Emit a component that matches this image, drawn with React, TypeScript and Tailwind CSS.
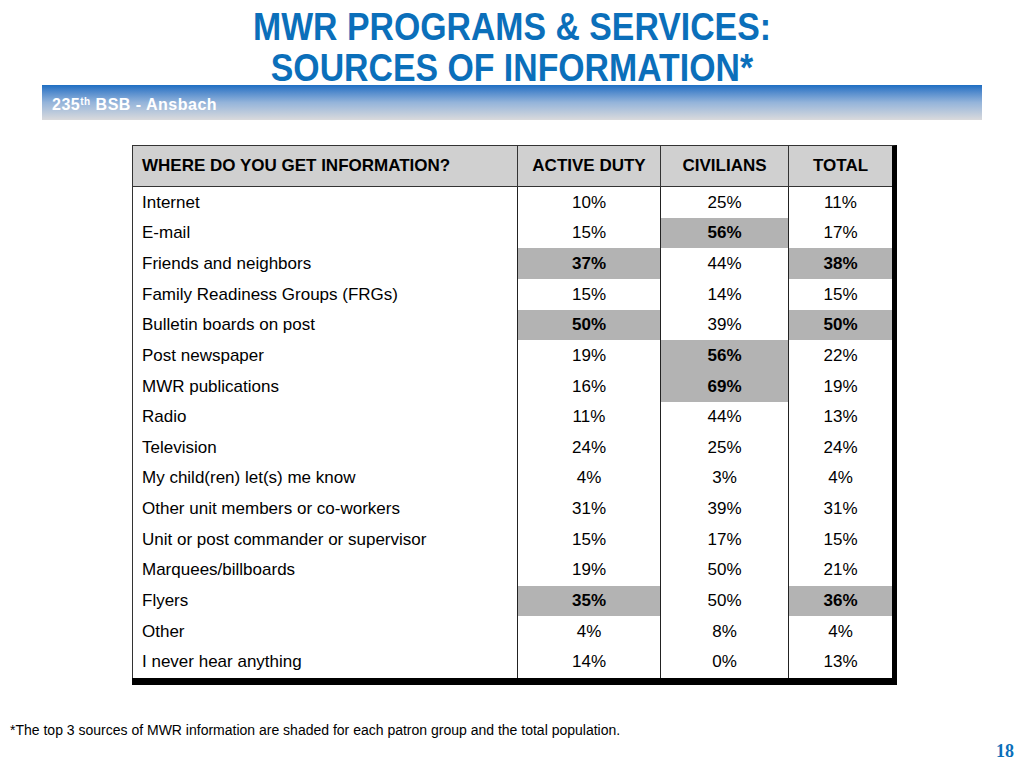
import React from "react";

type Row = { label: string; a: string; c: string; t: string; sa?: boolean; sc?: boolean; st?: boolean };

const rows: Row[] = [
  { label: "Internet", a: "10%", c: "25%", t: "11%" },
  { label: "E-mail", a: "15%", c: "56%", t: "17%", sc: true },
  { label: "Friends and neighbors", a: "37%", c: "44%", t: "38%", sa: true, st: true },
  { label: "Family Readiness Groups (FRGs)", a: "15%", c: "14%", t: "15%" },
  { label: "Bulletin boards on post", a: "50%", c: "39%", t: "50%", sa: true, st: true },
  { label: "Post newspaper", a: "19%", c: "56%", t: "22%", sc: true },
  { label: "MWR publications", a: "16%", c: "69%", t: "19%", sc: true },
  { label: "Radio", a: "11%", c: "44%", t: "13%" },
  { label: "Television", a: "24%", c: "25%", t: "24%" },
  { label: "My child(ren) let(s) me know", a: "4%", c: "3%", t: "4%" },
  { label: "Other unit members or co-workers", a: "31%", c: "39%", t: "31%" },
  { label: "Unit or post commander or supervisor", a: "15%", c: "17%", t: "15%" },
  { label: "Marquees/billboards", a: "19%", c: "50%", t: "21%" },
  { label: "Flyers", a: "35%", c: "50%", t: "36%", sa: true, st: true },
  { label: "Other", a: "4%", c: "8%", t: "4%" },
  { label: "I never hear anything", a: "14%", c: "0%", t: "13%" },
];

function Cell({ value, shaded }: { value: string; shaded?: boolean }) {
  return (
    <div
      className={
        "h-[30.67px] flex items-center justify-center border-l border-[#222] " +
        (shaded ? "bg-[#b3b3b3] font-bold" : "bg-white")
      }
    >
      {value}
    </div>
  );
}

export default function App() {
  return (
    <div
      className="w-[1024px] h-[768px] bg-white overflow-hidden flex flex-col"
      style={{ fontFamily: '"Liberation Sans", Arial, sans-serif' }}
    >
      <div className="h-[85px] pt-[7px] flex flex-col items-center text-[#0b6fba] font-bold text-[38px] leading-[41px]">
        <div className="scale-x-[0.89] whitespace-nowrap">MWR PROGRAMS &amp; SERVICES:</div>
        <div className="scale-x-[0.89] whitespace-nowrap">SOURCES OF INFORMATION*</div>
      </div>

      <div className="mx-[42px] h-[35px] bg-gradient-to-b from-[#1c6ec2] via-[#94b4da] to-[#dadadc] flex items-end pl-[10px] pb-[6px]">
        <span className="text-white font-bold text-[16px] leading-[18px] tracking-[0.5px]">
          235<sup className="text-[10px] font-bold">th</sup> BSB - Ansbach
        </span>
      </div>

      <div className="ml-[132px] mt-[25px] w-[765px] border-t border-[#333] border-r-[5px] border-r-black border-b-[7px] border-b-black text-black text-[17px]">
        <div className="grid grid-cols-[385px_143px_128px_104px] h-[41px] bg-[#d0d0d0] border-b border-[#333] font-bold text-[17px]">
          <div className="flex items-center pl-[9px] border-l border-[#333]">WHERE DO YOU GET INFORMATION?</div>
          <div className="flex items-center justify-center border-l border-[#333]">ACTIVE DUTY</div>
          <div className="flex items-center justify-center border-l border-[#333]">CIVILIANS</div>
          <div className="flex items-center justify-center border-l border-[#333]">TOTAL</div>
        </div>
        {rows.map((r) => (
          <div key={r.label} className="grid grid-cols-[385px_143px_128px_104px]">
            <div className="h-[30.67px] flex items-center pl-[9px] border-l border-[#333] bg-white">{r.label}</div>
            <Cell value={r.a} shaded={r.sa} />
            <Cell value={r.c} shaded={r.sc} />
            <Cell value={r.t} shaded={r.st} />
          </div>
        ))}
      </div>

      <div className="mt-[37px] pl-[10px] text-[14px] leading-[16px] text-black">
        *The top 3 sources of MWR information are shaded for each patron group and the total population.
      </div>
      <div
        className="flex justify-end pr-[10px] mt-[3px] text-[#0b6fba] font-bold text-[18px] leading-[20px]"
        style={{ fontFamily: '"Liberation Serif", "Times New Roman", serif' }}
      >
        18
      </div>
    </div>
  );
}
